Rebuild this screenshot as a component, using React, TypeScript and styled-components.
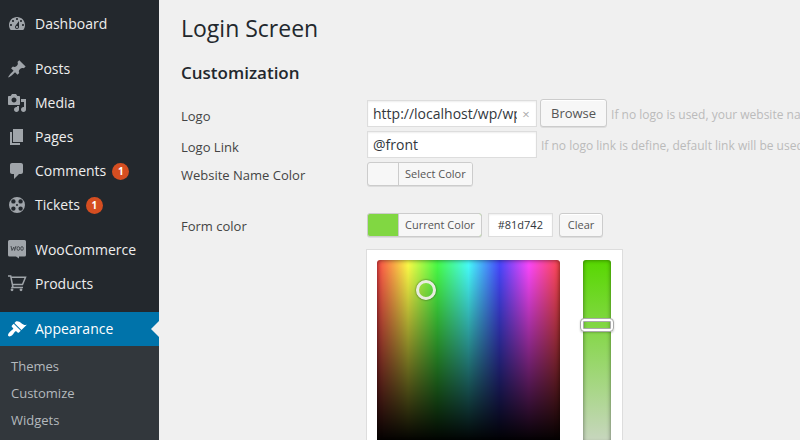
import React, { useState } from "react";
import styled, { createGlobalStyle, css } from "styled-components";

const GlobalStyle = createGlobalStyle`
  *, *::before, *::after { box-sizing: border-box; }
  html, body, #root { height: 100%; }
  body {
    margin: 0;
    overflow: hidden;
    background: #f0f0f0;
    color: #444;
    font: 13px/18px "Open Sans", sans-serif;
  }
  button, input { font-family: inherit; margin: 0; }
`;

const Page = styled.div`
  display: flex;
  min-height: 100vh;
`;

const Sidebar = styled.nav`
  flex: 0 0 159px;
  padding-top: 7px;
  background: #23282d;
`;

const Menu = styled.ul`
  margin: 0;
  padding: 0;
  list-style: none;
`;

const MenuItem = styled.li<{ $gap?: boolean }>`
  margin-top: ${(p) => (p.$gap ? 11 : 0)}px;
`;

const MenuLink = styled.a<{ $active?: boolean }>`
  position: relative;
  display: flex;
  align-items: center;
  gap: 8px;
  height: 34px;
  padding-left: 7px;
  color: #eee;
  font-size: 14px;
  line-height: 18px;
  text-decoration: none;

  svg { flex: none; fill: #a0a5aa; }

  ${(p) =>
    p.$active &&
    css`
      background: #0073aa;
      color: #fff;
      svg { fill: #fff; }
      &::after {
        content: "";
        position: absolute;
        right: 0;
        top: 9px;
        border: 8px solid transparent;
        border-left-width: 0;
        border-right-color: #f0f0f0;
      }
    `}
`;

const Count = styled.span`
  min-width: 17px;
  height: 17px;
  margin-left: -2px;
  border-radius: 10px;
  background: #d54e21;
  color: #fff;
  font-size: 10px;
  font-weight: 700;
  line-height: 17px;
  text-align: center;
`;

const SubMenu = styled.ul`
  margin: 0;
  padding: 7px 0 8px;
  list-style: none;
  background: #32373c;
`;

const SubLink = styled.a`
  display: block;
  padding: 4px 11px 5px;
  color: #b4b9be;
  font-size: 13px;
  line-height: 18px;
  text-decoration: none;
`;

const Content = styled.main`
  flex: 1;
  min-width: 0;
  padding: 12px 0 0 22px;
`;

const Title = styled.h1`
  margin: 0;
  color: #23282d;
  font-size: 23px;
  font-weight: 400;
  line-height: 32px;
`;

const Section = styled.h2`
  margin: 17px 0 0;
  color: #23282d;
  font-size: 17px;
  font-weight: 600;
  line-height: 24px;
`;

const Form = styled.form`
  display: grid;
  grid-template-columns: 186px minmax(0, 1fr);
  row-gap: 3px;
  margin-top: 14px;
`;

const Label = styled.label<{ $compact?: boolean }>`
  padding-top: ${(p) => (p.$compact ? 5 : 8)}px;
  line-height: 18px;
`;

const Field = styled.div`
  display: flex;
  align-items: flex-start;
  gap: 3px;
  min-width: 0;
`;

const InputWrap = styled.div`
  position: relative;
  flex: 0 0 170px;
  margin-top: 1px;
`;

const TextInput = styled.input<{ $clearable?: boolean }>`
  display: block;
  width: 100%;
  height: 27px;
  padding: 0 ${(p) => (p.$clearable ? 19 : 5)}px 1px 5px;
  border: 1px solid #ddd;
  border-radius: 0;
  background: #fff;
  box-shadow: inset 0 1px 2px rgba(0, 0, 0, 0.07);
  color: #32373c;
  font-size: 14px;
  outline: none;
`;

const ClearInput = styled.button`
  position: absolute;
  top: 5px;
  right: 5px;
  width: 12px;
  height: 18px;
  padding: 0;
  border: 0;
  background: none;
  color: #aaa;
  font-size: 13px;
  line-height: 18px;
`;

const buttonFace = css`
  border: 1px solid #ccc;
  border-radius: 3px;
  background: #f7f7f7;
  box-shadow: inset 0 1px 0 #fff, 0 1px 0 rgba(0, 0, 0, 0.08);
  color: #555;
  white-space: nowrap;
`;

const Button = styled.button<{ $small?: boolean }>`
  ${buttonFace}
  height: ${(p) => (p.$small ? 24 : 28)}px;
  padding: 0 ${(p) => (p.$small ? 8 : 10)}px;
  font-size: ${(p) => (p.$small ? 11 : 13)}px;
  line-height: ${(p) => (p.$small ? 22 : 26)}px;
`;

const ColorButton = styled.button<{ $color: string }>`
  ${buttonFace}
  display: flex;
  height: 24px;
  padding: 0;
  overflow: hidden;
  background: ${(p) => p.$color};
  box-shadow: 0 1px 0 rgba(0, 0, 0, 0.08);
  font-size: 11px;
  line-height: 22px;

  span {
    margin-left: 30px;
    padding: 0 6px;
    border-left: 1px solid #ccc;
    background: #f7f7f7;
  }
`;

const HexInput = styled(TextInput)`
  width: 65px;
  height: 24px;
  padding: 0 4px 2px;
  font-size: 11px;
  text-align: center;
`;

const Hint = styled.span`
  min-width: 0;
  padding: 7px 0 0 1px;
  overflow: hidden;
  color: #bbb;
  font-size: 12px;
  line-height: 18px;
  white-space: nowrap;
`;

const ColorField = styled.div<{ $spaced?: boolean }>`
  min-width: 0;
  padding: 1px 0 ${(p) => (p.$spaced ? 23 : 0)}px;
`;

const ColorRow = styled.div`
  display: flex;
  gap: 6px;
`;

const Picker = styled.div`
  display: flex;
  justify-content: space-between;
  width: 257px;
  height: 208px;
  margin: 12px 0 0 -1px;
  padding: 10px 11px 10px 10px;
  border: 1px solid #ddd;
  background: #fff;
`;

const Spectrum = styled.div`
  position: relative;
  width: 183px;
  height: 183px;
  border-radius: 3px;
  background:
    linear-gradient(to bottom, rgba(0, 0, 0, 0), #000),
    linear-gradient(to right, #ff4848, #ffff48 17%, #48ff48 33%, #48ffff 50%, #4848ff 67%, #ff48ff 83%, #ff4848);
  box-shadow: inset 0 0 5px rgba(0, 0, 0, 0.6);
`;

const Handle = styled.button`
  position: absolute;
  left: 39px;
  top: 20px;
  width: 20px;
  height: 20px;
  padding: 0;
  border: 3px solid #e8ecdf;
  border-radius: 50%;
  background: none;
  box-shadow: 0 0 2px rgba(0, 0, 0, 0.7);
`;

const Strip = styled.div`
  position: relative;
  width: 28px;
  height: 183px;
  border-radius: 3px;
  background: linear-gradient(to bottom, #57d800, #81d742 35%, #c9d6c1);
  box-shadow: inset 0 0 4px rgba(0, 0, 0, 0.5);
`;

const StripHandle = styled.input`
  position: absolute;
  left: -3px;
  top: 58px;
  width: 34px;
  height: 14px;
  margin: 0;
  appearance: none;
  border: 1px solid #aaa;
  border-radius: 4px;
  background: none;
  box-shadow: inset 0 0 0 2px #fff, inset 0 0 0 3px #aaa, 0 1px 2px rgba(0, 0, 0, 0.2);

  &::-webkit-slider-thumb { appearance: none; width: 28px; height: 8px; }
`;

const PATHS = {
  dashboard:
    "M3.76 16h12.48c1.1-1.37 1.76-3.11 1.76-5 0-4.42-3.58-8-8-8s-8 3.58-8 8c0 1.89.66 3.63 1.76 5zM10 4c.55 0 1 .45 1 1s-.45 1-1 1-1-.45-1-1 .45-1 1-1zM6 6c.55 0 1 .45 1 1s-.45 1-1 1-1-.45-1-1 .45-1 1-1zm8 0c.55 0 1 .45 1 1s-.45 1-1 1-1-.45-1-1 .45-1 1-1zm-5.37 5.55L12 7v6c0 1.1-.9 2-2 2s-2-.9-2-2c0-.57.24-1.08.63-1.45zM4 10c.55 0 1 .45 1 1s-.45 1-1 1-1-.45-1-1 .45-1 1-1zm12 0c.55 0 1 .45 1 1s-.45 1-1 1-1-.45-1-1 .45-1 1-1zm-5 3c0-.55-.45-1-1-1s-1 .45-1 1 .45 1 1 1 1-.45 1-1z",
  post:
    "M10.44 3.02l1.82-1.82 6.36 6.35-1.83 1.82c-1.05-.68-2.48-.57-3.41.36l-.75.75c-.92.93-1.04 2.35-.35 3.41l-1.83 1.82-2.41-2.41-2.8 2.79c-.42.42-3.38 2.71-3.8 2.29s1.86-3.39 2.28-3.81l2.79-2.79L4.1 9.36l1.83-1.82c1.05.69 2.48.57 3.4-.36l.75-.75c.93-.92 1.05-2.35.36-3.41z",
  media:
    "M13 11V4c0-.55-.45-1-1-1h-1.67L9 1H5L3.67 3H2c-.55 0-1 .45-1 1v7c0 .55.45 1 1 1h10c.55 0 1-.45 1-1zM7 4.5c1.38 0 2.5 1.12 2.5 2.5S8.38 9.5 7 9.5 4.5 8.38 4.5 7 5.62 4.5 7 4.5zM14 6h5v10.5c0 1.38-1.12 2.5-2.5 2.5S14 17.88 14 16.5s1.12-2.5 2.5-2.5c.17 0 .34.02.5.05V9h-3V6zm-4 8.05V13h2v3.5c0 1.38-1.12 2.5-2.5 2.5S7 17.88 7 16.5 8.12 14 9.5 14c.17 0 .34.02.5.05z",
  page: "M6 15V2h10v13H6zm-1 1h8v2H3V5h2v11z",
  comments:
    "M5 2h9c1.1 0 2 .9 2 2v7c0 1.1-.9 2-2 2h-2l-5 5v-5H5c-1.1 0-2-.9-2-2V4c0-1.1.9-2 2-2z",
  tickets:
    "M10 2a8 8 0 1 0 0 16a8 8 0 0 0 0-16zM6.4 4.2a2.2 2.2 0 1 1 0 4.4a2.2 2.2 0 0 1 0-4.4zM13.6 4.2a2.2 2.2 0 1 1 0 4.4a2.2 2.2 0 0 1 0-4.4zM6.4 11.4a2.2 2.2 0 1 1 0 4.4a2.2 2.2 0 0 1 0-4.4zM13.6 11.4a2.2 2.2 0 1 1 0 4.4a2.2 2.2 0 0 1 0-4.4zM10 9a1 1 0 1 1 0 2a1 1 0 0 1 0-2z",
  appearance:
    "M14.48 11.06L7.41 3.99l1.5-1.5c.5-.56 2.3-.47 3.51.32 1.21.8 1.43 1.28 2.91 2.1 1.18.64 2.45 1.26 4.45.85zm-.71.71L6.7 4.7 4.93 6.47c-.39.39-.39 1.02 0 1.41l1.06 1.06c.39.39.39 1.03 0 1.42-.6.6-1.43 1.11-2.21 1.69-.35.26-.7.53-1.01.84C1.43 14.23.4 16.08 1.4 17.07c.99 1 2.84-.03 4.18-1.36.31-.31.58-.66.85-1.02.57-.78 1.08-1.61 1.69-2.21.39-.39 1.02-.39 1.41 0l1.06 1.06c.39.39 1.02.39 1.41 0z",
};

const Glyph = ({ name }: { name: keyof typeof PATHS }) => (
  <svg width="20" height="20" viewBox="0 0 20 20" aria-hidden="true">
    <path fillRule="evenodd" d={PATHS[name]} />
  </svg>
);

const WooGlyph = () => (
  <svg width="20" height="20" viewBox="0 0 20 20" aria-hidden="true">
    <path d="M2.5 0h15A1.500 1.500 0 0 1 19 1.500v13.500a1.500 1.500 0 0 1-1.500 1.500h-5.500v2l-3-2H2.500A1.500 1.500 0 0 1 1 15V1.500A1.500 1.500 0 0 1 2.500 0z" />
    <g fill="none" stroke="#464b50" strokeWidth="1">
      <path d="M4 6l1 4.500 1.800-3.500.8 3.500L9 6" />
      <ellipse cx="11.300" cy="8.500" rx="1.300" ry="1.900" />
      <ellipse cx="15" cy="8.500" rx="1.300" ry="1.900" />
    </g>
  </svg>
);

const CartGlyph = () => (
  <svg width="20" height="20" viewBox="0 0 20 20" aria-hidden="true">
    <g fill="none" stroke="#a0a5aa" strokeWidth="1.500">
      <path d="M1 2h2.700l2.300 11.500M3.800 3.300h14.700l-3 7.200H5.600M4.200 13.500H16" />
    </g>
    <circle cx="5" cy="15.800" r="1.400" />
    <circle cx="14" cy="15.800" r="1.400" />
  </svg>
);

type Item = { label: string; icon: React.ReactNode; gap?: boolean; count?: number; active?: boolean; sub?: string[] };

const ITEMS: Item[] = [
  { label: "Dashboard", icon: <Glyph name="dashboard" /> },
  { label: "Posts", icon: <Glyph name="post" />, gap: true },
  { label: "Media", icon: <Glyph name="media" /> },
  { label: "Pages", icon: <Glyph name="page" /> },
  { label: "Comments", icon: <Glyph name="comments" />, count: 1 },
  { label: "Tickets", icon: <Glyph name="tickets" />, count: 1 },
  { label: "WooCommerce", icon: <WooGlyph />, gap: true },
  { label: "Products", icon: <CartGlyph /> },
  {
    label: "Appearance",
    icon: <Glyph name="appearance" />,
    gap: true,
    active: true,
    sub: ["Themes", "Customize", "Widgets"],
  },
];

export default function App() {
  const [logo, setLogo] = useState("http://localhost/wp/wp-content/uploads/logo.png");
  const [link, setLink] = useState("@front");
  const [hex, setHex] = useState("#81d742");

  return (
    <Page>
      <GlobalStyle />
      <Sidebar aria-label="Main menu">
        <Menu>
          {ITEMS.map((item) => (
            <MenuItem key={item.label} $gap={item.gap}>
              <MenuLink href="#" $active={item.active}>
                {item.icon}
                {item.label}
                {item.count && <Count>{item.count}</Count>}
              </MenuLink>
              {item.sub && (
                <SubMenu>
                  {item.sub.map((s) => (
                    <li key={s}>
                      <SubLink href="#">{s}</SubLink>
                    </li>
                  ))}
                </SubMenu>
              )}
            </MenuItem>
          ))}
        </Menu>
      </Sidebar>
      <Content>
        <Title>Login Screen</Title>
        <Section>Customization</Section>
        <Form onSubmit={(e) => e.preventDefault()}>
          <Label htmlFor="logo">Logo</Label>
          <Field>
            <InputWrap>
              <TextInput id="logo" $clearable value={logo} onChange={(e) => setLogo(e.target.value)} />
              <ClearInput type="button" aria-label="Clear logo" onClick={() => setLogo("")}>
                ×
              </ClearInput>
            </InputWrap>
            <Button type="button">Browse</Button>
            <Hint>If no logo is used, your website name will be displayed.</Hint>
          </Field>
          <Label htmlFor="link">Logo Link</Label>
          <Field>
            <InputWrap>
              <TextInput id="link" value={link} onChange={(e) => setLink(e.target.value)} />
            </InputWrap>
            <Hint>If no logo link is define, default link will be used.</Hint>
          </Field>
          <Label htmlFor="name-color" $compact>
            Website Name Color
          </Label>
          <ColorField $spaced>
            <ColorRow>
              <ColorButton id="name-color" type="button" $color="#f7f7f7">
                <span>Select Color</span>
              </ColorButton>
            </ColorRow>
          </ColorField>
          <Label htmlFor="form-color" $compact>
            Form color
          </Label>
          <ColorField>
            <ColorRow>
              <ColorButton id="form-color" type="button" $color={hex}>
                <span>Current Color</span>
              </ColorButton>
              <HexInput aria-label="Form color value" value={hex} onChange={(e) => setHex(e.target.value)} />
              <Button type="button" $small onClick={() => setHex("")}>
                Clear
              </Button>
            </ColorRow>
            <Picker>
              <Spectrum>
                <Handle type="button" aria-label="Hue and brightness" />
              </Spectrum>
              <Strip>
                <StripHandle type="range" aria-label="Saturation" />
              </Strip>
            </Picker>
          </ColorField>
        </Form>
      </Content>
    </Page>
  );
}
